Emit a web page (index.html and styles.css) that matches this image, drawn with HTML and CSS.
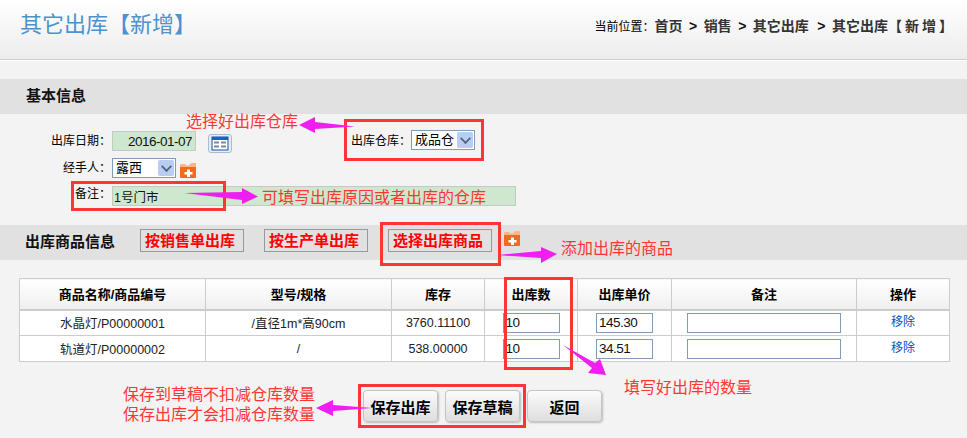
FILE: index.html
```html
<!DOCTYPE html>
<html lang="zh-CN">
<head>
<meta charset="utf-8">
<title>其它出库【新增】</title>
<link rel="stylesheet" href="styles.css">
</head>
<body>
<svg class="defs" width="0" height="0" aria-hidden="true">
  <symbol id="folder" viewBox="0 0 16 16">
    <path d="M0 3.5 Q0 2 1.5 2H5L6.5 3.5H9L11 1H15Q16 1 16 2V5H0Z" fill="#f6b58c"/>
    <path d="M0 5H16V15Q16 16 15 16H1Q0 16 0 15Z" fill="#f5691c"/>
    <path d="M7 7.5H10V10H12.5V12.5H10V15H7V12.5H4.500V10H7Z" fill="#fff"/>
  </symbol>
</svg>
<header class="top">
  <h1 class="title">其它出库【新增】</h1>
  <div class="crumbs"><span class="crumb-label">当前位置：</span>首页<b>&gt;</b>销售<b>&gt;</b>其它出库<b class="last">&gt;</b>其它出库<span class="crumb-tail">【新增</span>】</div>
</header>

<section class="bar bar-basic"><h2>基本信息</h2></section>

<form class="form">
  <div class="row row-date">
    <label class="label">出库日期：</label>
    <input class="field date" value="2016-01-07">
    <span class="cal">
      <svg width="24" height="19" viewBox="0 0 24 19">
        <rect x=".5" y=".5" width="23" height="18" rx="2.500" fill="#e6edf4" stroke="#a9bccd"/>
        <rect x="4" y="3" width="16" height="13" fill="#fff" stroke="#0f4fb0"/>
        <rect x="4" y="3" width="16" height="3" fill="#1c63c6"/>
        <path d="M6 8.500h5M13 8.500h5M6 12.500h5M13 12.500h5" stroke="#7a8896" stroke-width="2"/>
      </svg>
    </span>
    <label class="label label-wh">出库仓库：</label>
    <span class="sel sel-wh">成品仓<i class="arrow"></i></span>
  </div>
  <div class="row row-person">
    <label class="label">经手人：</label>
    <span class="sel sel-person">露西<i class="arrow"></i></span>
    <svg class="folder"><use href="#folder"/></svg>
  </div>
  <div class="row row-note">
    <label class="label">备注：</label>
    <input class="field note" value="1号门市">
  </div>
</form>

<section class="bar bar-goods">
  <h2>出库商品信息</h2>
  <button class="redbtn" type="button">按销售单出库</button>
  <button class="redbtn" type="button">按生产单出库</button>
  <button class="redbtn" type="button">选择出库商品</button>
  <svg class="folder folder-goods"><use href="#folder"/></svg>
</section>

<table class="goods">
  <colgroup>
    <col class="c1"><col class="c1"><col class="c2"><col class="c2"><col class="c3"><col class="c4"><col class="c2">
  </colgroup>
  <thead>
    <tr><th>商品名称/商品编号</th><th>型号/规格</th><th>库存</th><th>出库数</th><th>出库单价</th><th>备注</th><th>操作</th></tr>
  </thead>
  <tbody>
    <tr>
      <td>水晶灯/P00000001</td><td>/直径1m*高90cm</td><td>3760.11100</td>
      <td><input class="cell num" value="10"></td>
      <td><input class="cell num" value="145.30"></td>
      <td><input class="cell memo"></td>
      <td><a class="remove" href="#">移除</a></td>
    </tr>
    <tr>
      <td>轨道灯/P00000002</td><td>/</td><td>538.00000</td>
      <td><input class="cell num" value="10"></td>
      <td><input class="cell num" value="34.51"></td>
      <td><input class="cell memo"></td>
      <td><a class="remove" href="#">移除</a></td>
    </tr>
  </tbody>
</table>

<div class="actions">
  <button class="btn" type="button">保存出库</button>
  <button class="btn" type="button">保存草稿</button>
  <button class="btn" type="button">返回</button>
</div>

<!-- Tutorial annotations drawn over the page -->
<div class="mark m1"></div>
<div class="mark m2"></div>
<div class="mark m3"></div>
<div class="mark m4"></div>
<div class="mark m5"></div>

<p class="tip t1">选择好出库仓库</p>
<p class="tip t2">可填写出库原因或者出库的仓库</p>
<p class="tip t3">添加出库的商品</p>
<p class="tip t4">填写好出库的数量</p>
<p class="tip t5">保存到草稿不扣减仓库数量<br>保存出库才会扣减仓库数量</p>

<svg class="arrows" width="967" height="438" viewBox="0 0 967 438" aria-hidden="true">
  <path d="M355 126.500L315 122L315 117L299 125L315 133L315 129Z"/>
  <path d="M184 193L242 192L242 188L258 196.500L242 204L242 200Z"/>
  <path d="M497 255L541 251L541 247L557 254L541 263L541 258Z"/>
  <path d="M563 345L595 363L600 359L606 375L588 373L592 368Z"/>
  <path d="M372 408L333 405L333 400L316 408L333 416L333 411Z"/>
</svg>
</body>
</html>
```

FILE: styles.css
```css
* { box-sizing: border-box; }
html, body { margin: 0; padding: 0; }
body {
  position: relative;
  width: 967px;
  height: 438px;
  overflow: hidden;
  background: #f3f3f3;
  color: #000;
  font-family: "Liberation Sans", "Noto Sans CJK SC", sans-serif;
  font-size: 12px;
}
.defs { position: absolute; }

.top {
  display: flex;
  justify-content: space-between;
  align-items: flex-start;
  height: 61px;
  padding: 12px 14px 0 20px;
  background: linear-gradient(#fff, #ececec);
  border-bottom: 1px solid #fff;
  box-shadow: inset 0 -1px 0 #cfcfcf;
}
.title {
  margin: 0;
  font-size: 22px;
  line-height: 26px;
  font-weight: 400;
  color: #4a93cf;
}
.crumbs {
  margin-top: 4px;
  font-size: 14px;
  line-height: 20px;
  color: #333;
  font-weight: 700;
  white-space: nowrap;
}
.crumb-label { font-size: 12px; font-weight: 400; color: #000; }
.crumb-tail { letter-spacing: 3px; }
.crumbs b { margin: 0 6.5px; color: #111; }
.crumbs .last { margin-left: 8.5px; }

.bar {
  display: flex;
  align-items: center;
  height: 35px;
  padding: 0 0 4px 26px;
  background: #e1e1e1;
}
.bar h2 { margin: 0; font-size: 15px; font-weight: 700; color: #111; }
.bar-basic { margin-top: 18px; }

.form { display: flex; flex-direction: column; height: 111px; }
.row { display: flex; align-items: flex-start; }
.row-date { margin-top: 17px; height: 27px; }
.row-person { height: 27px; }
.label { width: 112px; padding-right: 1px; text-align: right; line-height: 20px; white-space: nowrap; }
.row-note .label { line-height: 18px; }
.field {
  height: 20px;
  padding: 0 3px;
  border: 1px solid #c4c9c4;
  background: #cee8d0;
  color: #111;
  font: 12px "Liberation Sans", "Noto Sans CJK SC", sans-serif;
}
.date { width: 84px; text-align: right; font-size: 13.500px; letter-spacing: -.5px; }
.note { width: 404px; margin-top: 1px; padding-left: 1px; font-size: 12.500px; }
.cal { margin: 3px 0 0 12px; height: 19px; }
.cal svg { display: block; }
.label-wh { width: auto; margin-left: 119px; padding-right: 0; }
.sel {
  position: relative;
  display: block;
  height: 20px;
  padding: 0 0 0 3px;
  border: 1px solid #7f9db9;
  background: #fff;
  font-size: 13px;
  line-height: 18px;
}
.sel-wh { width: 64px; margin-top: -1px; }
.sel-person { width: 64px; }
.arrow {
  position: absolute;
  top: 1px;
  right: 1px;
  width: 16px;
  height: 16px;
  border-radius: 2px;
  background: #b9cdf0;
}
.arrow::after {
  content: "";
  position: absolute;
  left: 4px;
  top: 2px;
  width: 7px;
  height: 7px;
  border-right: 2px solid #4d6185;
  border-bottom: 2px solid #4d6185;
  transform: rotate(45deg) scale(.85);
}
.folder { display: block; width: 16px; height: 16px; margin: 4px 0 0 4px; }

.bar-goods { padding-left: 25px; }
.bar-goods h2 { width: 115px; }
.redbtn {
  width: 104px;
  height: 23px;
  margin: 0 20px 0 0;
  padding: 0 4px 0 0;
  border: 1px solid #999;
  background: transparent;
  color: #f00;
  font: 700 15px "Liberation Sans", "Noto Sans CJK SC", sans-serif;
  line-height: 20px;
}
.folder-goods { margin: 0 0 5px -8px; }

.goods {
  width: 931px;
  margin: 18px 0 0 19px;
  table-layout: fixed;
  border-collapse: collapse;
  background: #fff;
}
.c1 { width: 186px; }
.c2 { width: 93px; }
.c3 { width: 94px; }
.c4 { width: 185px; }
.goods th, .goods td {
  padding: 0;
  border: 1px solid #ccc;
  text-align: center;
}
.goods th {
  height: 31px;
  padding-bottom: 1px;
  border-bottom-width: 2px;
  font-size: 13px;
  font-weight: 700;
  background: linear-gradient(#fff, #efefef);
}
.goods td { height: 26px; font-size: 12.500px; color: #222; }
.cell {
  display: block;
  height: 20px;
  margin: 0 auto;
  padding: 0 2px;
  border: 1px solid #7f9db9;
  background: #fff;
  color: #111;
  font: 13.500px "Liberation Sans", sans-serif;
  letter-spacing: -.5px;
}
.num { width: 57px; }
.memo { width: 154px; }
.remove { display: block; margin-bottom: 4px; font-size: 12px; color: #0b4ec6; text-decoration: none; }

.actions {
  display: flex;
  gap: 7px;
  margin: 28px 0 0 363px;
}
.btn {
  width: 75px;
  height: 32px;
  padding: 0;
  border: 1px solid #c4c4c4;
  border-radius: 4px;
  background: linear-gradient(#fbfbfb, #dedede);
  box-shadow: 1px 1px 2px #bbb;
  color: #000;
  font: 700 15px "Liberation Sans", "Noto Sans CJK SC", sans-serif;
}

.mark { position: absolute; border: 3px solid #ff3535; }
.m1 { left: 344px; top: 119px; width: 140px; height: 42px; }
.m2 { left: 71px; top: 181px; width: 155px; height: 30px; }
.m3 { left: 380px; top: 222px; width: 121px; height: 44px; }
.m4 { left: 504px; top: 277px; width: 69px; height: 93px; }
.m5 { left: 358px; top: 384px; width: 168px; height: 44px; }

.tip {
  position: absolute;
  margin: 0;
  color: #ff3535;
  font-size: 16px;
  line-height: 20px;
  white-space: nowrap;
}
.t1 { left: 186px; top: 112px; }
.t2 { left: 262px; top: 188px; }
.t3 { left: 561px; top: 239px; }
.t4 { left: 624px; top: 378px; }
.t5 { left: 123px; top: 385px; }
.arrows { position: absolute; left: 0; top: 0; fill: #f01ef0; pointer-events: none; }
```
